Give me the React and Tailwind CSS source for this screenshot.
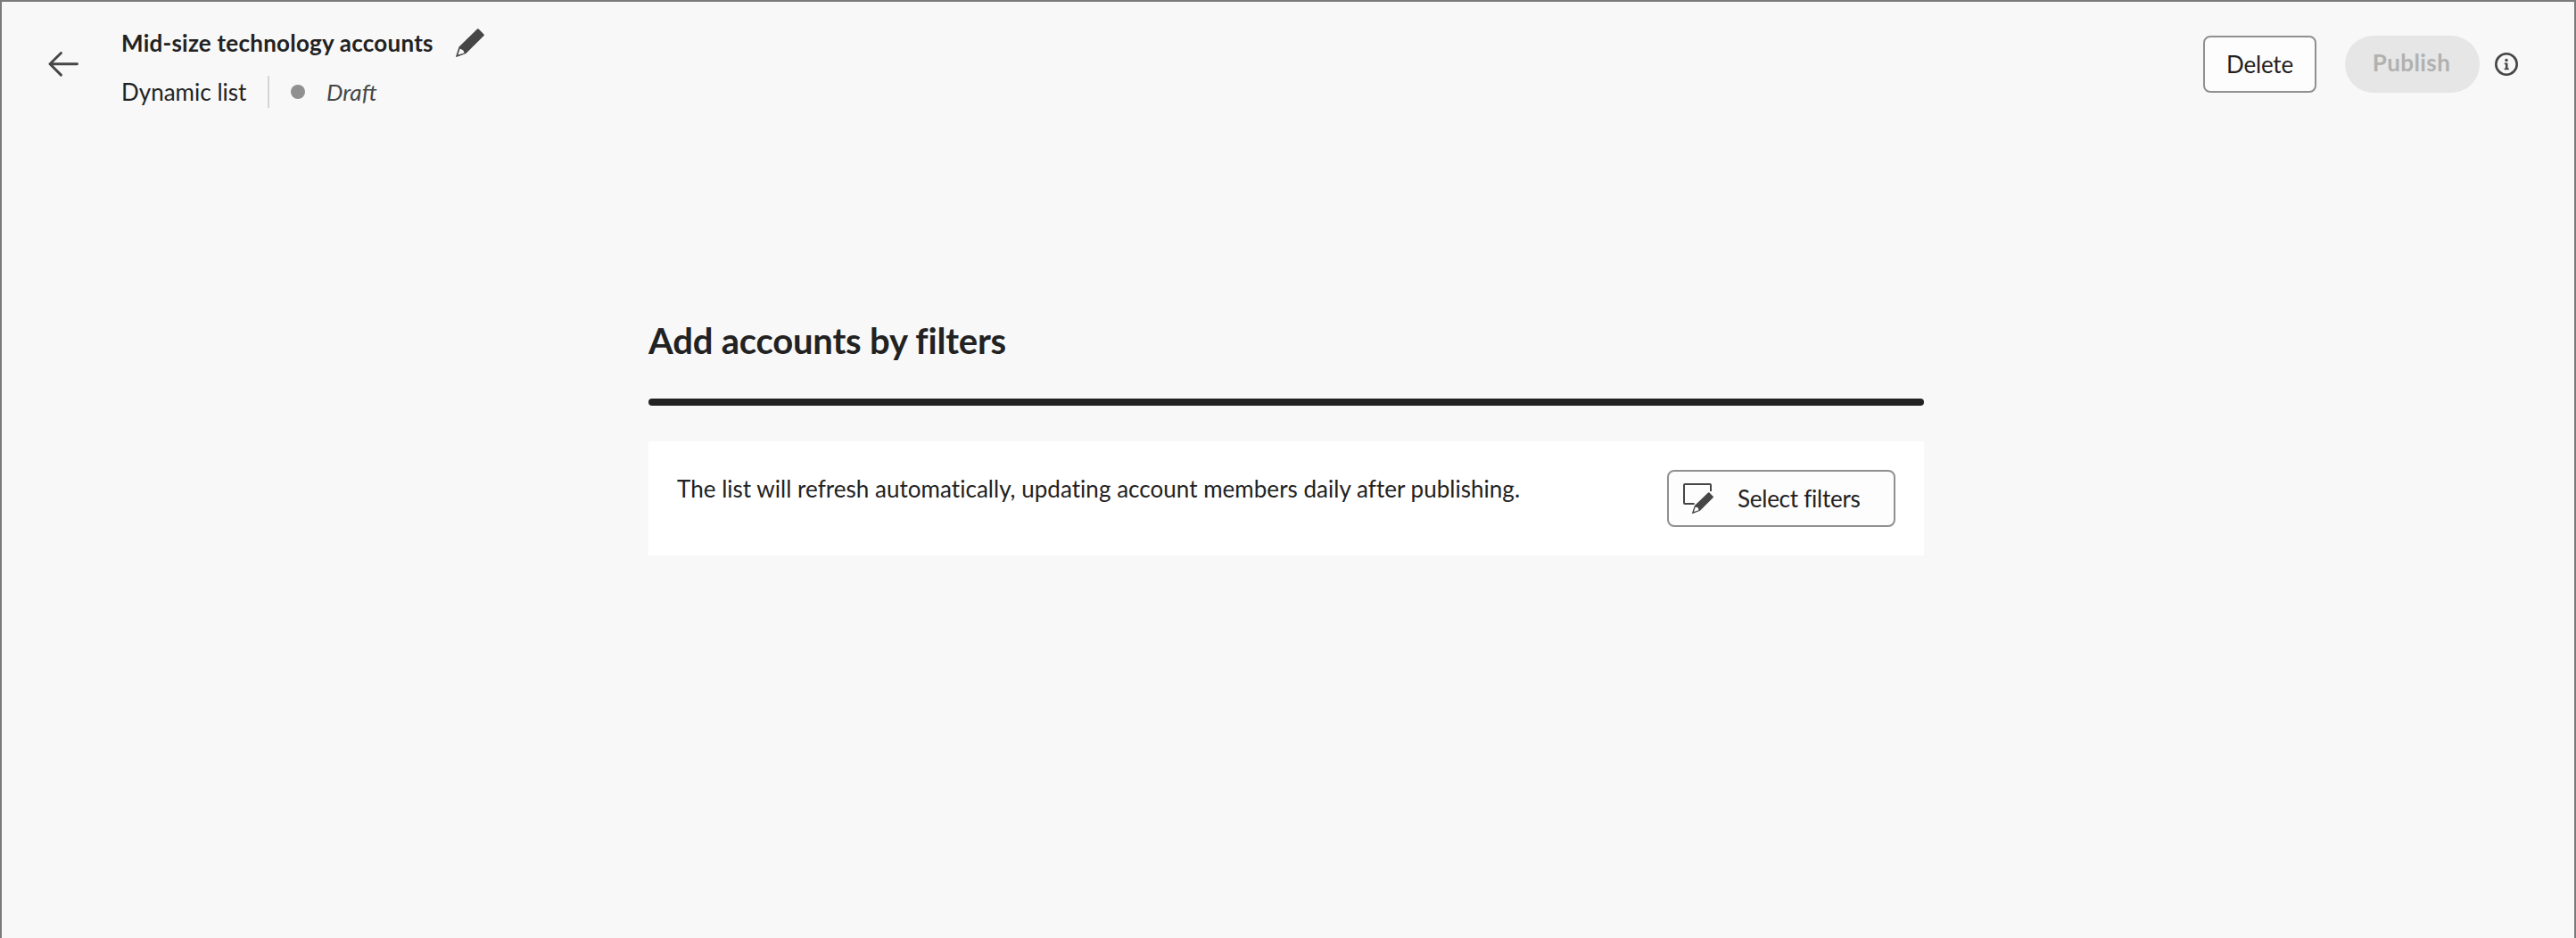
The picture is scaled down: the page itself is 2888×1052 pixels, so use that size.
function BackArrow() {
  return (
    <svg className="h-7 w-[34px]" viewBox="0 0 34 28" fill="none" stroke="#464646" strokeWidth="2.9" strokeLinecap="round" strokeLinejoin="round">
      <path d="M14.4 1.5 2 13.7l12.4 12.4M2 13.7h30.5" />
    </svg>
  );
}

function Pencil({ className }) {
  return (
    <svg className={className} viewBox="0 0 32 32" fill="#464646">
      <path
        fillRule="evenodd"
        d="M24.1.5a1.2 1.2 0 0 1 1.5 0l5.9 5.9a1.2 1.2 0 0 1 0 1.6L11.4 28 1.4 31.8a.9.9 0 0 1-1.1-1.1L3.6 20.6ZM4.7 22.6 2.4 29.6l7.2-2.1L8.4 24.6Z"
      />
    </svg>
  );
}

function SelectIcon() {
  return (
    <svg className="h-[34px] w-[34px]" viewBox="0 0 34 34">
      <path d="M12.6 23H2a1 1 0 0 1-1-1V2a1 1 0 0 1 1-1h28a1 1 0 0 1 1 1v7" fill="none" stroke="#464646" strokeWidth="2" />
      <path
        fill="#464646"
        fillRule="evenodd"
        d="M28 10.5a1.1 1.1 0 0 1 1.4 0l4.3 4.2a1.1 1.1 0 0 1 0 1.4L19 30.8 10.9 33.9a.6.6 0 0 1-.8-.8L12.9 25ZM13.8 26.6 12 31.9l5.5-1.7-.7-2.6Z"
      />
    </svg>
  );
}

function InfoIcon() {
  return (
    <svg className="h-[26px] w-[26px]" viewBox="0 0 26 26" fill="none" stroke="#464646">
      <circle cx="13" cy="13" r="11.7" strokeWidth="2.6" />
      <circle cx="13" cy="8.5" r="1.7" fill="#464646" stroke="none" />
      <path d="M10.8 12.4h1.4M10.6 18.4h5.2" strokeWidth="1.6" />
      <path d="M13.2 11.6v7" strokeWidth="2.5" />
    </svg>
  );
}

export default function App() {
  return (
    <div className="h-[1052px] w-[2888px] border-x-2 border-t-2 border-[#7c7a7a] bg-[#f8f8f8] font-['Lato','Open_Sans',sans-serif] text-[26px] leading-9 text-[#222222]">
      <header className="flex h-[120px] items-start pr-[63px] pl-[52px]">
        <button className="mt-14" aria-label="Back">
          <BackArrow />
        </button>
        <div className="mt-7 ml-12 flex flex-col gap-[19px]">
          <div className="flex h-9 items-center gap-6">
            <h1 className="w-[351px] font-bold tracking-[0.24px] whitespace-nowrap">Mid-size technology accounts</h1>
            <button aria-label="Edit name">
              <Pencil className="h-8 w-8" />
            </button>
          </div>
          <div className="flex h-9 items-center">
            <span className="w-[164px] tracking-[0.02px] whitespace-nowrap">Dynamic list</span>
            <span className="h-9 w-0.5 bg-[#d5d5d5]" />
            <span className="ml-6 h-4 w-4 rounded-full bg-[#909090]" />
            <span className="ml-6 text-[#464646] italic">Draft</span>
          </div>
        </div>
        <div className="mt-[38px] ml-auto flex items-center">
          <button className="h-16 w-[127px] rounded-lg border-2 border-[#909090] bg-[#fdfdfd] tracking-[-0.2px]">Delete</button>
          <button className="ml-8 h-16 w-[151px] rounded-full bg-[#e6e6e6] pr-0.5 pb-1 font-bold tracking-[0.4px] text-[#b1b1b1]" disabled>
            Publish
          </button>
          <span className="ml-[17px]">
            <InfoIcon />
          </span>
        </div>
      </header>
      <main className="mt-[236px] ml-[725px] w-[1430px]">
        <h2 className="text-[40px] leading-[49px] font-bold tracking-[-0.2px]">Add accounts by filters</h2>
        <div className="mt-10 h-2 rounded-full bg-[#222222]" />
        <section className="mt-10 flex h-32 items-start justify-between bg-white p-8">
          <p className="mt-[3px] tracking-[0.03px] whitespace-nowrap">
            The list will refresh automatically, updating account members daily after publishing.
          </p>
          <button className="flex h-16 w-64 items-center rounded-lg border-2 border-[#909090] bg-[#fdfdfd] pl-4">
            <SelectIcon />
            <span className="ml-[27px] tracking-[-0.25px] whitespace-nowrap">Select filters</span>
          </button>
        </section>
      </main>
    </div>
  );
}
